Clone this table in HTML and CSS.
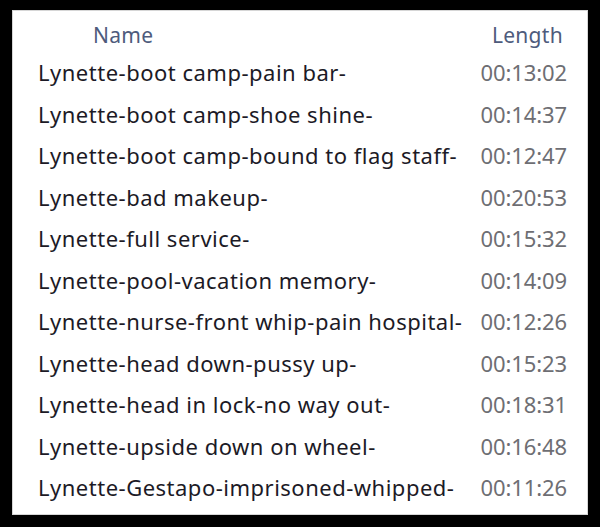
FILE: index.html
```html
<!DOCTYPE html>
<html lang="en">
<head>
    <meta charset="UTF-8">
    <meta name="viewport" content="width=device-width, initial-scale=1.0">
    <title>Lynette</title>
    <link rel="stylesheet" href="styles.css">
</head>
<body>

    <div class="panel">
        <div class="head">
            <span class="col-name">Name</span>
            <span class="col-length">Length</span>
        </div>

        <div class="row"><span class="name">Lynette-boot camp-pain bar-</span><span class="time">00:13:02</span></div>
        <div class="row"><span class="name">Lynette-boot camp-shoe shine-</span><span class="time">00:14:37</span></div>
        <div class="row"><span class="name">Lynette-boot camp-bound to flag staff-</span><span class="time">00:12:47</span></div>
        <div class="row"><span class="name">Lynette-bad makeup-</span><span class="time">00:20:53</span></div>
        <div class="row"><span class="name">Lynette-full service-</span><span class="time">00:15:32</span></div>
        <div class="row"><span class="name">Lynette-pool-vacation memory-</span><span class="time">00:14:09</span></div>
        <div class="row"><span class="name">Lynette-nurse-front whip-pain hospital-</span><span class="time">00:12:26</span></div>
        <div class="row"><span class="name">Lynette-head down-pussy up-</span><span class="time">00:15:23</span></div>
        <div class="row"><span class="name">Lynette-head in lock-no way out-</span><span class="time">00:18:31</span></div>
        <div class="row"><span class="name">Lynette-upside down on wheel-</span><span class="time">00:16:48</span></div>
        <div class="row"><span class="name">Lynette-Gestapo-imprisoned-whipped-</span><span class="time">00:11:26</span></div>
    </div>

</body>
</html>
```

FILE: styles.css
```css
body {
    font-family: "Noto Sans", "Open Sans", sans-serif;
    background-color: #000;
    margin: 0;
    padding: 10px 12px 12px 12px;
}
.panel {
    background-color: #fff;
    border: 1px solid #d6d6d6;
    box-sizing: border-box;
    width: 576px;
    height: 505px;
    padding: 0 20px 0 25px;
}
.head {
    display: flex;
    justify-content: space-between;
    padding-top: 8px;
    line-height: 33px;
    font-size: 21px;
    letter-spacing: 0.3px;
    color: #4e5b7c;
}
.col-name {
    margin-left: 55px;
}
.col-length {
    margin-right: 4px;
}
.row {
    display: flex;
    justify-content: space-between;
    line-height: 41.5px;
    font-size: 22px;
}
.name {
    color: #1c1a26;
    letter-spacing: 0.5px;
}
.time {
    color: #6e6e73;
    letter-spacing: -0.1px;
}
```
